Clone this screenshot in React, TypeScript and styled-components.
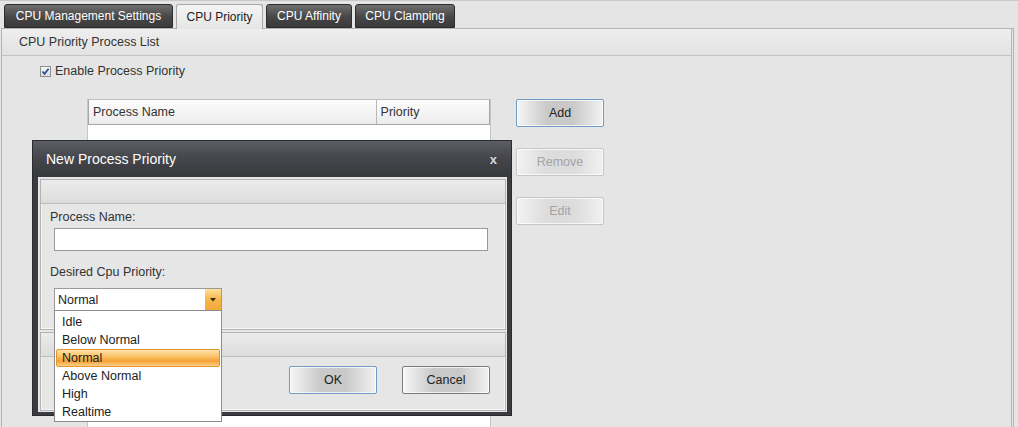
import styled, { createGlobalStyle } from "styled-components";

const GlobalStyle = createGlobalStyle`
  html, body {
    margin: 0;
    padding: 0;
    background: #e5e5e5;
    font-family: "Liberation Sans", Arial, sans-serif;
    font-size: 12.5px;
    color: #222;
  }
  #root {
    height: 427px;
    overflow: hidden;
  }
`;

const Page = styled.div`
  position: relative;
  width: 1018px;
  height: 427px;
  border-top: 1px solid #c8c8c8;
  box-sizing: border-box;
`;

const TabBar = styled.div`
  display: flex;
  gap: 3px;
  padding: 2px 0 0 4px;
  height: 25px;
  align-items: flex-end;
`;

const Tab = styled.div<{ active?: boolean; width: number }>`
  width: ${(p) => p.width}px;
  height: ${(p) => (p.active ? "25px" : "24px")};
  display: flex;
  align-items: center;
  justify-content: center;
  box-sizing: border-box;
  border: 1px solid ${(p) => (p.active ? "#a8a8a8" : "#2c2c2c")};
  border-bottom: ${(p) => (p.active ? "none" : "1px solid #2c2c2c")};
  border-radius: 3px 3px 0 0;
  background: ${(p) =>
    p.active
      ? "linear-gradient(#f4f4f4, #e6e6e6)"
      : "linear-gradient(#6e6e6e, #474747 55%, #3a3a3a)"};
  color: ${(p) => (p.active ? "#222" : "#fff")};
  font-size: 12px;
  position: relative;
  z-index: ${(p) => (p.active ? 2 : 1)};
  margin-bottom: ${(p) => (p.active ? "-1px" : "0")};
`;

const Panel = styled.div`
  margin-left: 1px;
  width: 1013px;
  height: 400px;
  border: 1px solid #b4b4b4;
  border-right: 3px double #b4b4b4;
  border-bottom: none;
  box-sizing: border-box;
  background: #e5e5e5;
`;

const PanelHeader = styled.div`
  height: 26px;
  padding-left: 17px;
  display: flex;
  align-items: center;
  background: linear-gradient(#eeeeee, #e2e2e2);
  border-bottom: 1px solid #c2c2c2;
  color: #333;
`;

const PanelBody = styled.div`
  padding: 9px 0 0 38px;
`;

const CheckRow = styled.label`
  display: flex;
  align-items: center;
  gap: 4px;
  height: 12px;
  color: #333;
`;

const CheckBox = styled.span`
  width: 11px;
  height: 11px;
  box-sizing: border-box;
  border: 1px solid #8f8f8f;
  background: linear-gradient(#f6f6f6, #dcdcdc);
  display: flex;
  align-items: center;
  justify-content: center;
`;

const ListRow = styled.div`
  display: flex;
  margin: 22px 0 0 47px;
`;

const Table = styled.div`
  width: 404px;
  height: 330px;
  background: #fff;
  border-left: 1px solid #c6c6c6;
  border-right: 1px solid #c6c6c6;
  box-sizing: border-box;
`;

const HeaderRow = styled.div`
  display: flex;
  height: 26px;
  border: 1px solid #a6a6a6;
  border-top-color: #c0c0c0;
  box-sizing: border-box;
  background: linear-gradient(#fdfdfd, #ececec);
`;

const HeaderCell = styled.div<{ width: number }>`
  width: ${(p) => p.width}px;
  padding-left: 4px;
  display: flex;
  align-items: center;
  color: #333;
  box-sizing: border-box;
  & + & {
    border-left: 1px solid #b8b8b8;
  }
`;

const ButtonColumn = styled.div`
  display: flex;
  flex-direction: column;
  gap: 21px;
  margin-left: 25px;
`;

const Button = styled.div<{ variant?: "focus" | "disabled" | "normal" }>`
  width: 88px;
  height: 28px;
  box-sizing: border-box;
  display: flex;
  align-items: center;
  justify-content: center;
  font-size: 12.5px;
  border-radius: 2px;
  border: 1px solid
    ${(p) =>
      p.variant === "focus"
        ? "#6f9cc4"
        : p.variant === "disabled"
        ? "#c6c6c6"
        : "#7a7a7a"};
  box-shadow: inset 0 0 0 1px rgba(255, 255, 255, 0.7);
  color: ${(p) => (p.variant === "disabled" ? "#a3a3a3" : "#222")};
  background: ${(p) =>
    p.variant === "disabled"
      ? "linear-gradient(90deg, #f2f2f2, #dcdcdc 35%, #dcdcdc 65%, #f0f0f0)"
      : "linear-gradient(90deg, #f6f6f6, #c9c9c9 35%, #c9c9c9 65%, #f2f2f2)"};
`;

/* dialog over the page */

const Modal = styled.div`
  position: absolute;
  left: 32px;
  top: 139px;
  width: 480px;
  box-sizing: border-box;
  background: #3a3c40;
  border: 1px solid #2a2b2e;
  padding: 0 4px 3px 5px;
  display: flex;
  flex-direction: column;
  z-index: 10;
`;

const TitleBar = styled.div`
  height: 36px;
  margin: 0 -4px 0 -5px;
  padding: 0 14px 0 13px;
  display: flex;
  align-items: center;
  justify-content: space-between;
  background: linear-gradient(#5b5e64, #45474c 45%, #36383c);
  color: #fff;
  font-size: 14px;
`;

const Close = styled.span`
  color: #d8d8d8;
  font-size: 13px;
  font-weight: bold;
`;

const ModalBody = styled.div`
  background: #e6e6e6;
  padding: 2px 1px 1px 2px;
  display: flex;
  flex-direction: column;
  gap: 2px;
`;

const Section = styled.div<{ height: number }>`
  height: ${(p) => p.height}px;
  flex-shrink: 0;
  border: 1px solid #b3b3b3;
  box-shadow: inset 0 0 0 1px #f6f6f6;
  box-sizing: border-box;
  display: flex;
  flex-direction: column;
`;

const SectionHead = styled.div`
  height: 24px;
  background: linear-gradient(#ececec, #dcdcdc);
  border-bottom: 1px solid #bdbdbd;
  box-sizing: border-box;
`;

const SectionContent = styled.div`
  padding: 6px 0 0 9px;
  display: flex;
  flex-direction: column;
  color: #333;
`;

const Label = styled.div<{ gapTop?: number }>`
  height: 14px;
  line-height: 14px;
  margin-top: ${(p) => p.gapTop ?? 0}px;
`;

const TextInput = styled.div`
  width: 434px;
  height: 23px;
  margin: 4px 0 0 4px;
  box-sizing: border-box;
  background: #fff;
  border: 1px solid #9a9a9a;
`;

const Select = styled.div`
  position: relative;
  width: 168px;
  height: 23px;
  margin: 9px 0 0 4px;
  box-sizing: border-box;
  background: #fff;
  border: 1px solid #9a9a9a;
  display: flex;
  align-items: center;
  padding-left: 3px;
  color: #222;
`;

const Arrow = styled.span`
  position: absolute;
  right: 0;
  top: 0;
  width: 16px;
  height: 21px;
  background: linear-gradient(#fde29a, #f7b54a 50%, #f5a93a);
  display: flex;
  align-items: center;
  justify-content: center;
`;

const DropList = styled.div`
  position: absolute;
  left: -1px;
  top: 21px;
  width: 168px;
  height: 112px;
  box-sizing: border-box;
  background: #fff;
  border: 1px solid #8c8c8c;
  padding: 2px 1px;
  z-index: 20;
`;

const Option = styled.div<{ selected?: boolean }>`
  height: 18px;
  box-sizing: border-box;
  display: flex;
  align-items: center;
  padding-left: 5px;
  color: #222;
  border-radius: 2px;
  border: 1px solid ${(p) => (p.selected ? "#e7952f" : "transparent")};
  background: ${(p) =>
    p.selected
      ? "linear-gradient(#fde3ac, #f9bd5e 45%, #f6a235 70%, #fbd08a)"
      : "transparent"};
`;

const ButtonRow = styled.div`
  display: flex;
  justify-content: flex-end;
  gap: 25px;
  padding: 9px 15px 0 0;
`;

const tabs = [
  { label: "CPU Management Settings", width: 169 },
  { label: "CPU Priority", width: 87, active: true },
  { label: "CPU Affinity", width: 86 },
  { label: "CPU Clamping", width: 100 },
];

const options = ["Idle", "Below Normal", "Normal", "Above Normal", "High", "Realtime"];

const App = () => {
  return (
    <>
      <GlobalStyle />
      <Page>
        <TabBar>
          {tabs.map((t) => (
            <Tab key={t.label} width={t.width} active={t.active}>
              {t.label}
            </Tab>
          ))}
        </TabBar>
        <Panel>
          <PanelHeader>CPU Priority Process List</PanelHeader>
          <PanelBody>
            <CheckRow>
              <CheckBox>
                <svg width="9" height="9" viewBox="0 0 9 9">
                  <path d="M1.5 4.5 L3.5 6.8 L7.6 1.8" fill="none" stroke="#2a4f9e" strokeWidth="1.8" />
                </svg>
              </CheckBox>
              Enable Process Priority
            </CheckRow>
            <ListRow>
              <Table>
                <HeaderRow>
                  <HeaderCell width={288}>Process Name</HeaderCell>
                  <HeaderCell width={114}>Priority</HeaderCell>
                </HeaderRow>
              </Table>
              <ButtonColumn>
                <Button variant="focus">Add</Button>
                <Button variant="disabled">Remove</Button>
                <Button variant="disabled">Edit</Button>
              </ButtonColumn>
            </ListRow>
          </PanelBody>
        </Panel>

        <Modal>
          <TitleBar>
            New Process Priority
            <Close>x</Close>
          </TitleBar>
          <ModalBody>
            <Section height={151}>
              <SectionHead />
              <SectionContent>
                <Label>Process Name:</Label>
                <TextInput />
                <Label gapTop={14}>Desired Cpu Priority:</Label>
                <Select>
                  Normal
                  <Arrow>
                    <svg width="6" height="4" viewBox="0 0 6 4">
                      <path d="M0 0 H6 L3 3.5 Z" fill="#3a2a10" />
                    </svg>
                  </Arrow>
                  <DropList>
                    {options.map((o) => (
                      <Option key={o} selected={o === "Normal"}>
                        {o}
                      </Option>
                    ))}
                  </DropList>
                </Select>
              </SectionContent>
            </Section>
            <Section height={79}>
              <SectionHead />
              <ButtonRow>
                <Button variant="focus">OK</Button>
                <Button>Cancel</Button>
              </ButtonRow>
            </Section>
          </ModalBody>
        </Modal>
      </Page>
    </>
  );
};

export default App;
